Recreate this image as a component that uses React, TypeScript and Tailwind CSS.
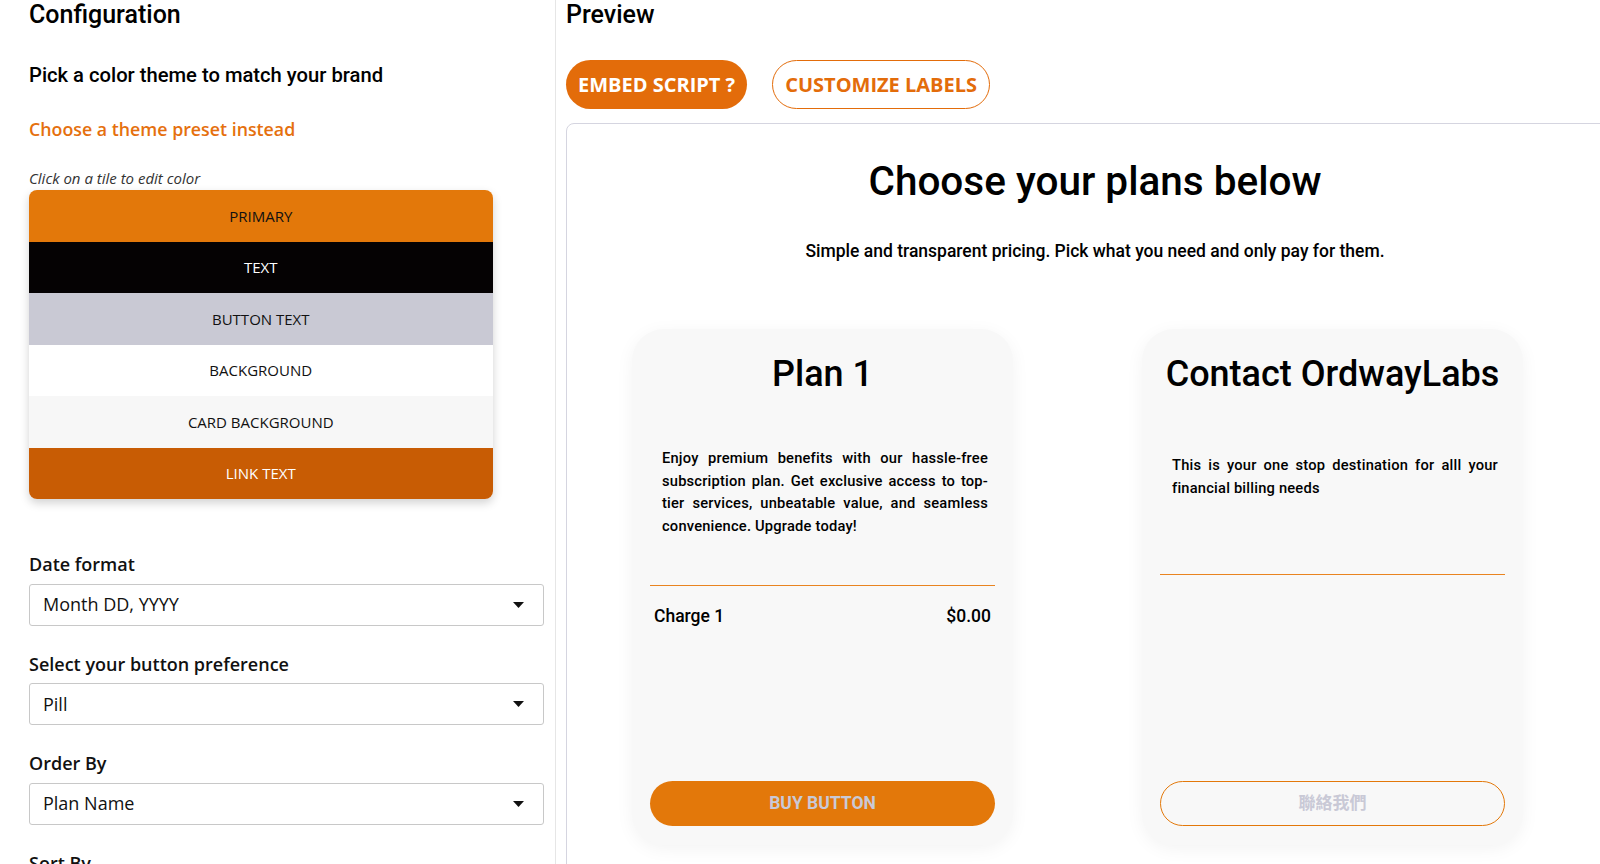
import { ReactNode } from 'react'

const tiles = [
  { label: 'PRIMARY', bg: 'bg-[#e3780a]', fg: 'text-[#111]' },
  { label: 'TEXT', bg: 'bg-[#050203]', fg: 'text-white' },
  { label: 'BUTTON TEXT', bg: 'bg-[#c9c9d4]', fg: 'text-[#111]' },
  { label: 'BACKGROUND', bg: 'bg-white', fg: 'text-[#111]' },
  { label: 'CARD BACKGROUND', bg: 'bg-[#f7f7f7]', fg: 'text-[#111]' },
  { label: 'LINK TEXT', bg: 'bg-[#c85c04]', fg: 'text-white' },
]

function SelectField({ label, value, first }: { label: string; value: string; first?: boolean }) {
  return (
    <div className={first ? 'mt-[53px]' : 'mt-[26px]'}>
      <p className="text-[18px] leading-6 font-semibold text-[#111]">{label}</p>
      <div className="mt-[7.5px] h-[42px] flex items-center justify-between border border-[#c8c8c8] rounded-[3px] pl-[13px] pr-[19px] bg-white">
        <span className="text-[18px] text-[#111]">{value}</span>
        <svg width="11" height="6" viewBox="0 0 11 6">
          <path d="M0 0h11L5.5 6z" fill="#111" />
        </svg>
      </div>
    </div>
  )
}

function PlanCard({
  title,
  children,
  descTop,
  lineGap,
  button,
}: {
  title: string
  children: ReactNode
  descTop: string
  lineGap: string
  button: ReactNode
}) {
  return (
    <div className="w-[381px] h-[516px] shrink-0 flex flex-col rounded-[32px] bg-[#f8f8f8] shadow-[0_4px_18px_rgba(0,0,0,0.05)] px-[18px] pt-[24px] pb-[19px]">
      <h3 className="text-center text-[36px] leading-[43px] font-medium text-black">{title}</h3>
      <p className={`${descTop} pl-3 pr-[7px] text-[14.7px] leading-[22.5px] font-medium text-black text-justify tracking-[0.2px]`}>
        {children}
      </p>
      <div className={`${lineGap} h-px bg-[#e98420]`} />
      {button}
    </div>
  )
}

export default function App() {
  return (
    <div className="h-screen w-full overflow-hidden bg-white flex" style={{ fontFamily: 'Roboto, sans-serif' }}>
      {/* left: config */}
      <div className="w-[556px] shrink-0 border-r border-[#e6e6e6] pl-[29px] pr-[11px]">
        <h2 className="mt-px text-[25px] leading-7 font-medium text-black">Configuration</h2>
        <p className="mt-[34px] text-[20.2px] leading-6 font-medium text-black">Pick a color theme to match your brand</p>
        <div style={{ fontFamily: '"Open Sans", sans-serif' }}>
          <p className="mt-[29.5px] text-[17.8px] leading-6 font-semibold text-[#e5700e]">Choose a theme preset instead</p>
          <p className="mt-[27px] text-[15px] leading-5 italic text-[#333]">Click on a tile to edit color</p>
          <div className="mt-[2.5px] w-[90%] rounded-lg overflow-hidden shadow-[0_4px_10px_rgba(0,0,0,0.18)]">
            {tiles.map((t) => (
              <div key={t.label} className={`h-[51.5px] flex items-center justify-center text-[15px] ${t.bg} ${t.fg}`}>
                {t.label}
              </div>
            ))}
          </div>
          <SelectField first label="Date format" value="Month DD, YYYY" />
          <SelectField label="Select your button preference" value="Pill" />
          <SelectField label="Order By" value="Plan Name" />
          <SelectField label="Sort By" value="Ascending" />
        </div>
      </div>

      {/* right: preview */}
      <div className="flex-1 min-w-0 pl-[10px]">
        <h2 className="mt-px text-[25px] leading-7 font-medium text-black">Preview</h2>
        <div className="mt-[31px] flex gap-[25px]" style={{ fontFamily: '"Open Sans", sans-serif' }}>
          <button className="h-[49px] px-[12px] rounded-full bg-[#e36c0a] text-white text-[20px] font-bold">
            EMBED SCRIPT ?
          </button>
          <button className="h-[49px] px-[12px] rounded-full border border-[#e36c0a] text-[#e36c0a] text-[20px] font-bold">
            CUSTOMIZE LABELS
          </button>
        </div>
        <div className="mt-[14px] w-[1058px] h-[760px] border border-[#d5d5e0] rounded-tl-lg pt-[33px]">
          <h1 className="text-center text-[40.5px] leading-[48px] font-medium text-black">Choose your plans below</h1>
          <p className="mt-[34px] text-center text-[17.5px] leading-6 font-medium text-black">
            Simple and transparent pricing. Pick what you need and only pay for them.
          </p>
          <div className="mt-[66px] pl-[65px] flex gap-[129px]">
            <PlanCard
              title="Plan 1"
              descTop="mt-[51px]"
              lineGap="mt-[48px]"
              button={
                <>
                  <div className="mt-[18px] flex justify-between px-1 text-[17.5px] leading-6 font-medium text-black">
                    <span>Charge 1</span>
                    <span>$0.00</span>
                  </div>
                  <button className="mt-auto h-[45px] rounded-full bg-[#e3780a] text-[#c9c9d6] text-[17.5px] font-bold">
                    BUY BUTTON
                  </button>
                </>
              }
            >
              Enjoy premium benefits with our hassle-free subscription plan. Get exclusive access to top-tier services,
              unbeatable value, and seamless convenience. Upgrade today!
            </PlanCard>
            <PlanCard
              title="Contact OrdwayLabs"
              descTop="mt-[58px]"
              lineGap="mt-[75px]"
              button={
                <button
                  className="mt-auto h-[45px] rounded-full border border-[#e3780a] text-[#c9c9d6] text-[17px] font-bold"
                  style={{ fontFamily: 'Roboto, "Noto Sans CJK TC", sans-serif' }}
                >
                  聯絡我們
                </button>
              }
            >
              This is your one stop destination for alll your financial billing needs
            </PlanCard>
          </div>
        </div>
      </div>
    </div>
  )
}
